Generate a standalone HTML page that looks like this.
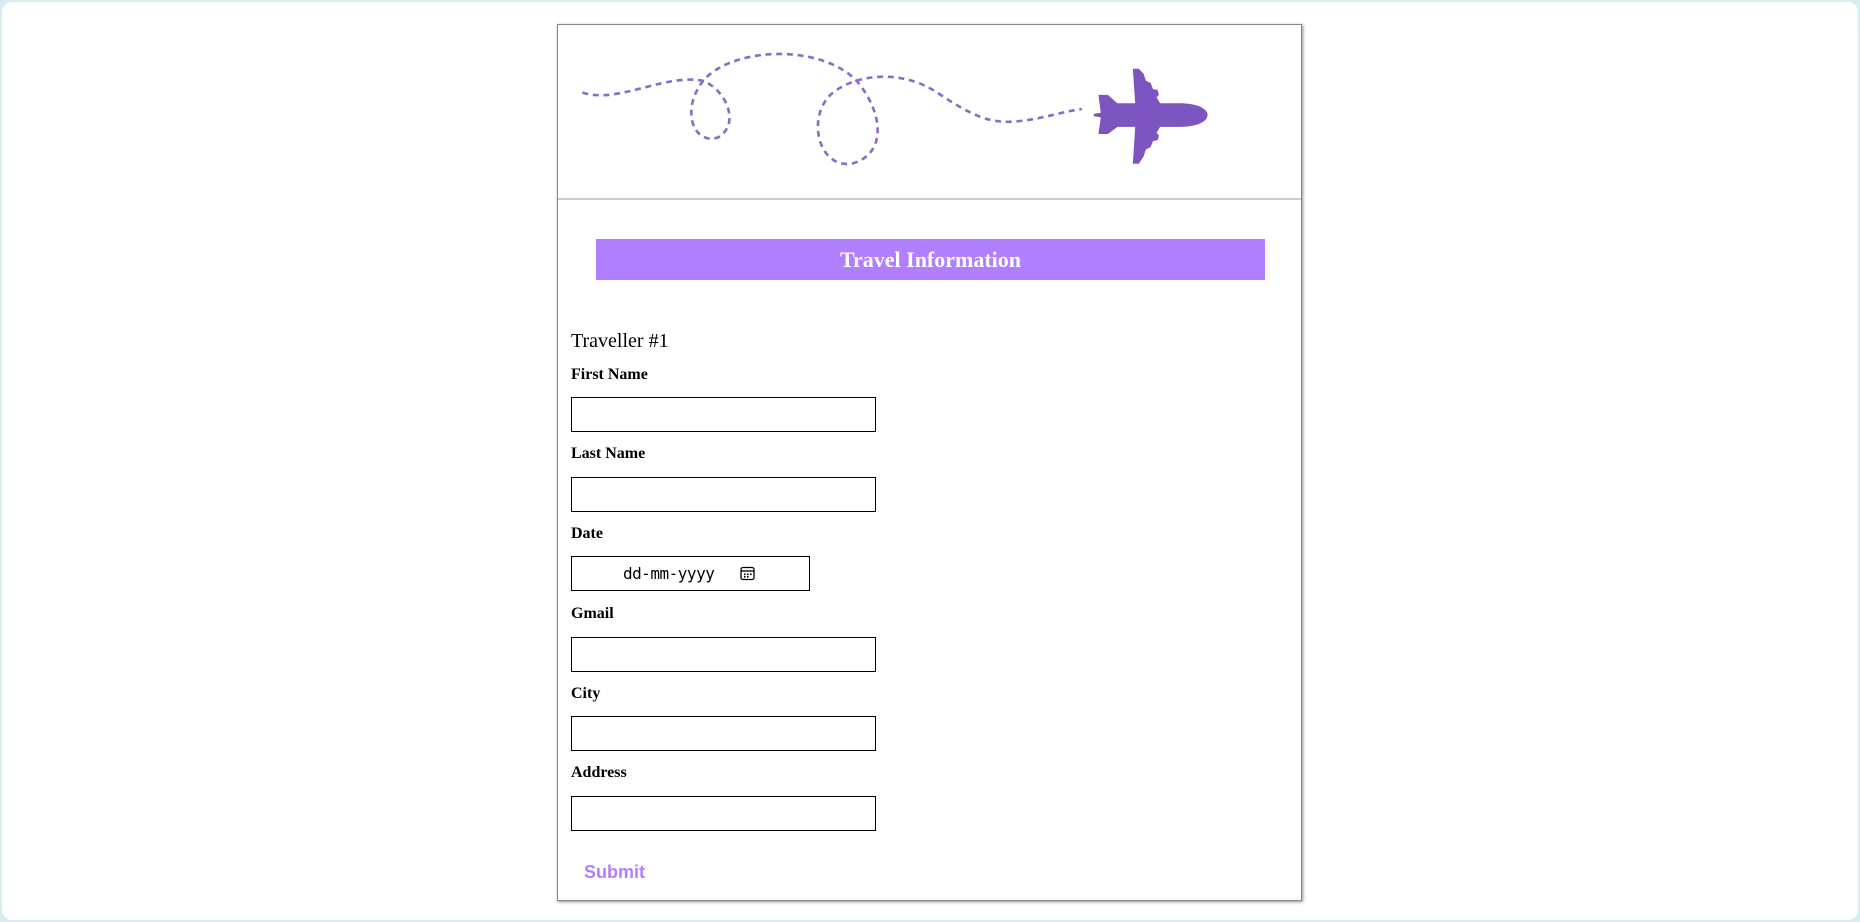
<!DOCTYPE html>
<html><head><meta charset="utf-8"><style>
html,body{margin:0;padding:0;width:1860px;height:922px;overflow:hidden;background:#d9ecef;}
.page{position:absolute;left:2px;top:2px;width:1856px;height:918px;background:#fff;border-radius:10px;}
.card{position:absolute;left:557px;top:24px;width:743px;height:875px;border:1px solid #888;box-shadow:1px 1px 3px rgba(0,0,0,.45);background:#fff;}
.hdr{position:absolute;left:0;top:0;width:743px;height:173px;border-bottom:2px solid #ccc;}
.banner{position:absolute;left:38px;top:214px;width:669px;height:41px;background:#b07fff;color:#fff;font:bold 22px "Liberation Serif",serif;text-align:center;line-height:41px;}
.t{position:absolute;left:13px;font-family:"Liberation Serif",serif;color:#000;}
.lbl{font-weight:bold;font-size:16px;}
.inp{position:absolute;left:13px;width:303px;height:33px;border:1px solid #000;}
.sub{position:absolute;left:26px;top:837px;color:#b07fff;font:bold 18px "Liberation Sans",sans-serif;}
</style></head><body>
<div class="page"></div>
<div class="card">
  <div class="hdr"></div>
  <div class="banner">Travel Information</div>
  <div class="t" style="top:305px;font-size:20px;">Traveller #1</div>
  <div class="t lbl" style="top:341px;">First Name</div>
  <div class="inp" style="top:372px;"></div>
  <div class="t lbl" style="top:420px;">Last Name</div>
  <div class="inp" style="top:452px;"></div>
  <div class="t lbl" style="top:500px;">Date</div>
  <div class="inp" style="top:531px;width:237px;">
    <span style="position:absolute;left:51px;top:7px;font:16px 'DejaVu Sans Mono',monospace;letter-spacing:-0.5px;">dd-mm-yyyy</span>
    <svg style="position:absolute;left:168px;top:9px" width="15" height="15" viewBox="0 0 15 15"><rect x="1" y="1.5" width="13" height="12" rx="2" fill="none" stroke="#000" stroke-width="1.3"/><line x1="1" y1="5" x2="14" y2="5" stroke="#000" stroke-width="1.3"/><rect x="4" y="7.5" width="1.6" height="1.6"/><rect x="7" y="7.5" width="1.6" height="1.6"/><rect x="10" y="7.5" width="1.6" height="1.6"/><rect x="4" y="10" width="1.6" height="1.6"/><rect x="7" y="10" width="1.6" height="1.6"/></svg>
  </div>
  <div class="t lbl" style="top:580px;">Gmail</div>
  <div class="inp" style="top:612px;"></div>
  <div class="t lbl" style="top:660px;">City</div>
  <div class="inp" style="top:691px;"></div>
  <div class="t lbl" style="top:739px;">Address</div>
  <div class="inp" style="top:771px;"></div>
  <div class="sub">Submit</div>
</div>
<svg style="position:absolute;left:0;top:0" width="1860" height="922" viewBox="0 0 1860 922">
<g transform="scale(1.1862)">
<path d="M491,78 C520,88 560,62 592,68 C612,75 625,105 605,116 C585,122 575,95 590,72 C610,40 690,35 722,68 C745,95 748,130 718,138 C690,142 680,100 700,80 C720,62 760,58 790,78 C820,98 835,105 860,102 C880,100 895,94 912,92" fill="none" stroke="#8a6cc8" stroke-width="2.2" stroke-dasharray="5 4"/>
<path d="M1018,97 C1018,91 1008,87 995,87 L978,87 L975,82 L977,80 L976,76 L972,75 L970,70 L966,68 L964,62 L960,58 L955,58 L957,87 L942,87 L934,80 L926,80 L928,95 L922,96 L922,98 L928,99 L926,113 L934,113 L942,107 L957,107 L955,138 L960,138 L964,132 L966,126 L970,124 L972,119 L976,118 L977,114 L975,112 L978,107 L995,107 C1008,107 1018,103 1018,97Z" fill="#7c55c0"/>
</g>
</svg>
</body></html>
